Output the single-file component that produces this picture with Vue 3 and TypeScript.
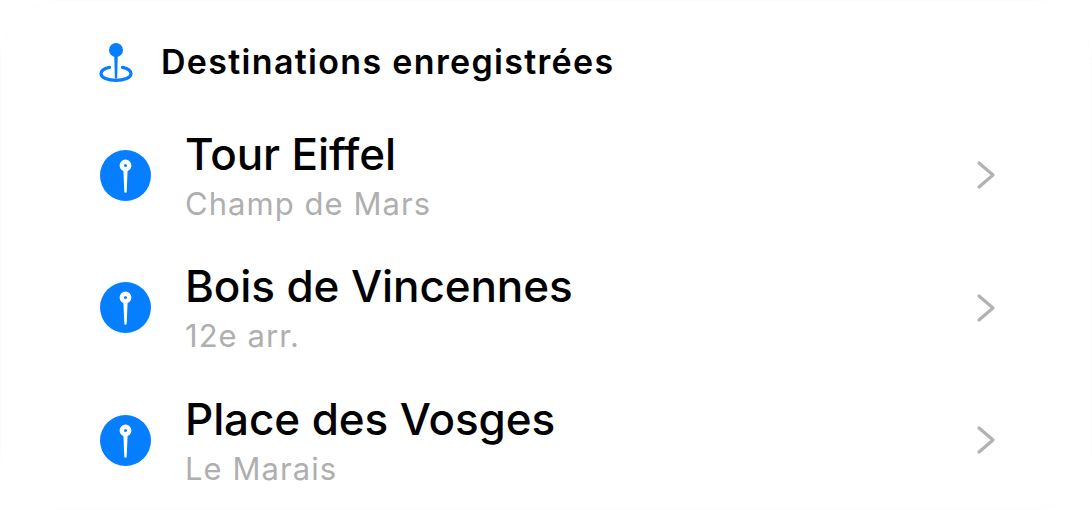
<script setup lang="ts">
const rows = [
  { title: 'Tour Eiffel', sub: 'Champ de Mars' },
  { title: 'Bois de Vincennes', sub: '12e arr.' },
  { title: 'Place des Vosges', sub: 'Le Marais' },
]
</script>

<template>
  <div class="card">
    <header class="head">
      <svg class="head-icon" width="34" height="40" viewBox="0 0 34 40">
        <path d="M10.500 25.400C5.500 26.400 2 29 2 31.800 2 35.600 8.700 38.400 17 38.400S32 35.600 32 31.800C32 29 28.500 26.400 23.500 25.400" fill="none" stroke="#057fff" stroke-width="3.200" stroke-linecap="round" />
        <path d="M15.200 12h3.600l-.6 23.500a1.200 1.200 0 0 1-2.400 0z" fill="#057fff" />
        <circle cx="17" cy="8" r="7" fill="#057fff" />
      </svg>
      <h1 class="head-title">Destinations enregistrées</h1>
    </header>
    <ul class="list">
      <li v-for="r in rows" :key="r.title" class="row">
        <svg class="pin" width="51" height="51" viewBox="0 0 51 51">
          <circle cx="25.500" cy="25.500" r="25.500" fill="#057fff" />
          <path d="M23.300 18h4.400l-1 23.500a1.200 1.200 0 0 1-2.400 0z" fill="#fff" />
          <circle cx="25.500" cy="15.500" r="3.700" fill="none" stroke="#fff" stroke-width="4.400" />
        </svg>
        <div class="text">
          <div class="title">{{ r.title }}</div>
          <div class="sub">{{ r.sub }}</div>
        </div>
        <svg class="chev" width="20" height="30" viewBox="0 0 20 30">
          <path d="M3 3l14 12L3 27" fill="none" stroke="#b2b2b2" stroke-width="3.200" stroke-linecap="round" stroke-linejoin="round" />
        </svg>
      </li>
    </ul>
  </div>
</template>

<style>
html, body { margin: 0; background: #fff; }
</style>

<style scoped>
.card {
  box-sizing: border-box;
  width: 1092px;
  height: 510px;
  border-radius: 62px;
  background: #fff;
  outline: 1px dotted #f8f8f8;
  outline-offset: -1px;
  padding: 42px 96px 0 100px;
  font-family: Inter, "Liberation Sans", sans-serif;
  overflow: hidden;
}
.head {
  display: flex;
  align-items: center;
  height: 40px;
}
.head-icon { margin-left: -1px; flex: none; }
.head-title {
  margin: 0 0 0 28px;
  font-size: 34px;
  font-weight: 600;
  letter-spacing: 1.320px;
  line-height: 40px;
  color: #000;
}
.list {
  list-style: none;
  margin: 27px 0 0;
  padding: 0;
}
.row {
  display: flex;
  align-items: center;
  height: 132.500px;
}
.pin { flex: none; }
.text {
  flex: 1;
  margin-left: 34px;
}
.title {
  font-size: 44px;
  font-weight: 500;
  letter-spacing: -0.1px;
  line-height: 54px;
  color: #000;
}
.sub {
  margin-top: 3px;
  font-size: 31px;
  letter-spacing: 1.050px;
  line-height: 40px;
  color: #afafaf;
}
.chev { flex: none; }
</style>
